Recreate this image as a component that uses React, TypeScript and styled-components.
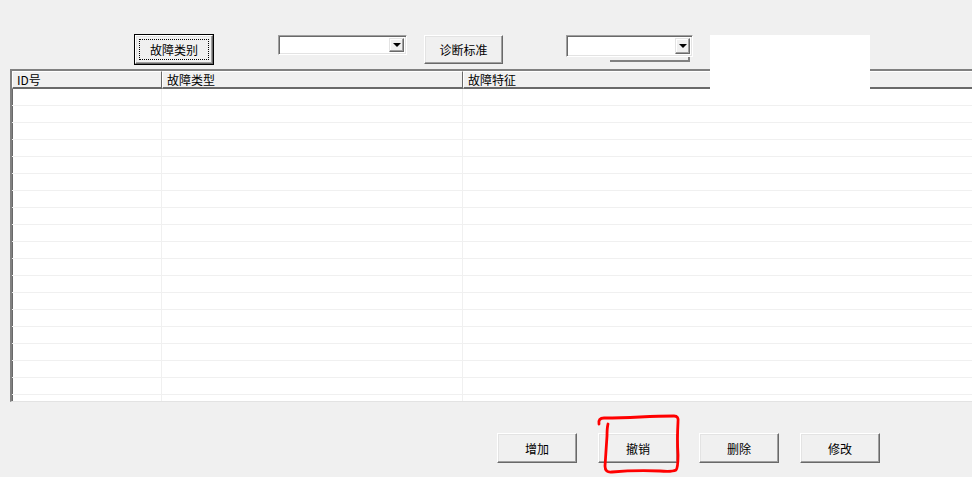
import React from "react";
import styled, { createGlobalStyle } from "styled-components";

const GlobalStyle = createGlobalStyle`
  html, body {
    margin: 0;
    padding: 0;
    background: #f0f0f0;
    overflow: hidden;
  }
  body {
    font-family: "Noto Sans CJK SC", "DejaVu Sans", sans-serif;
    font-size: 12px;
    color: #000;
  }
`;

const Page = styled.div`
  position: relative;
  width: 972px;
  height: 477px;
  overflow: hidden;
  background: #f0f0f0;
`;

const Toolbar = styled.div`
  display: flex;
  align-items: flex-start;
  padding: 35px 0 0 135px;
  height: 29px;
`;

const RaisedButton = styled.button<{ $focused?: boolean; $width?: number; $height?: number }>`
  position: relative;
  box-sizing: border-box;
  width: ${(p) => p.$width ?? 80}px;
  height: ${(p) => p.$height ?? 30}px;
  margin: 0;
  padding: 0;
  background: #f0f0f0;
  font-family: inherit;
  font-size: 12px;
  color: #000;
  border: 1px solid;
  border-color: #ffffff #696969 #696969 #ffffff;
  box-shadow: inset -1px -1px 0 #a0a0a0, inset 1px 1px 0 #e3e3e3;
  outline: ${(p) => (p.$focused ? "1px solid #000" : "none")};
  outline-offset: 0;
  cursor: default;

  &::after {
    content: "";
    display: ${(p) => (p.$focused ? "block" : "none")};
    position: absolute;
    inset: 3px;
    border: 1px dotted #000;
  }
`;

const Combo = styled.div<{ $width: number; $height: number; $left: number }>`
  position: relative;
  box-sizing: border-box;
  margin-left: ${(p) => p.$left}px;
  width: ${(p) => p.$width}px;
  height: ${(p) => p.$height}px;
  background: #fff;
  border: 1px solid;
  border-color: #a0a0a0 #ffffff #ffffff #a0a0a0;
  box-shadow: inset 1px 1px 0 #696969, inset -1px -1px 0 #e3e3e3;
`;

const ComboArrow = styled.div`
  position: absolute;
  top: 2px;
  right: 2px;
  bottom: 2px;
  width: 15px;
  box-sizing: border-box;
  background: #f0f0f0;
  border: 1px solid;
  border-color: #e3e3e3 #696969 #696969 #e3e3e3;
  box-shadow: inset -1px -1px 0 #a0a0a0, inset 1px 1px 0 #fff;
  display: flex;
  align-items: center;
  justify-content: center;

  &::before {
    content: "";
    width: 0;
    height: 0;
    border-left: 4px solid transparent;
    border-right: 4px solid transparent;
    border-top: 4px solid #000;
  }
`;

const HiddenLedge = styled.div`
  position: absolute;
  left: 43px;
  top: 100%;
  width: 80px;
  height: 5px;
  box-sizing: border-box;
  background: #f0f0f0;
  border-right: 2px solid #808080;
  border-bottom: 2px solid #808080;
  margin-top: 1px;
`;

const WhitePatch = styled.div`
  position: absolute;
  left: 710px;
  top: 35px;
  width: 160px;
  height: 55px;
  background: #fff;
  z-index: 2;
`;

const Grid = styled.div`
  margin: 5px 0 0 10px;
  width: 980px;
  height: 333px;
  box-sizing: border-box;
  background: #fff;
  border-top: 2px solid #808080;
  border-left: 2px solid #808080;
  border-bottom: 1px solid #e3e3e3;
  box-shadow: inset 1px 1px 0 #696969;
  overflow: hidden;
`;

const Cols = "150px 301px 1fr";

const HeaderRow = styled.div`
  display: grid;
  grid-template-columns: ${Cols};
  height: 18px;
`;

const HeaderCell = styled.div`
  box-sizing: border-box;
  padding-left: 4px;
  background: #f0f0f0;
  border-top: 1px solid #ffffff;
  border-left: 1px solid #ffffff;
  border-right: 1px solid #696969;
  border-bottom: 2px solid #696969;
  line-height: 15px;
  white-space: nowrap;
`;

const BodyRow = styled.div`
  display: grid;
  grid-template-columns: ${Cols};
  height: 17px;
`;

const BodyCell = styled.div`
  box-sizing: border-box;
  border-right: 1px solid #f0f0f0;
  border-bottom: 1px solid #f0f0f0;
`;

const Actions = styled.div`
  display: flex;
  gap: 21px;
  padding: 31px 0 0 497px;
`;

const Scribble = styled.svg`
  position: absolute;
  left: 0;
  top: 0;
  pointer-events: none;
  z-index: 3;
`;

const rows = Array.from({ length: 19 });

export default function App() {
  return (
    <Page>
      <GlobalStyle />
      <Toolbar>
        <RaisedButton $focused $width={78} $height={29}>
          故障类别
        </RaisedButton>
        <Combo $left={65} $width={129} $height={20}>
          <ComboArrow />
        </Combo>
        <RaisedButton $width={79} $height={29} style={{ marginLeft: 17 }}>
          诊断标准
        </RaisedButton>
        <Combo $left={63} $width={127} $height={22}>
          <ComboArrow />
          <HiddenLedge />
        </Combo>
      </Toolbar>
      <WhitePatch />
      <Grid>
        <HeaderRow>
          <HeaderCell>ID号</HeaderCell>
          <HeaderCell>故障类型</HeaderCell>
          <HeaderCell>故障特征</HeaderCell>
        </HeaderRow>
        {rows.map((_, i) => (
          <BodyRow key={i}>
            <BodyCell />
            <BodyCell />
            <BodyCell />
          </BodyRow>
        ))}
      </Grid>
      <Actions>
        <RaisedButton>增加</RaisedButton>
        <RaisedButton>撤销</RaisedButton>
        <RaisedButton>删除</RaisedButton>
        <RaisedButton>修改</RaisedButton>
      </Actions>
      <Scribble width="972" height="477" viewBox="0 0 972 477">
        <path
          d="M599 424 Q598 418 604 418 Q620 418 640 417 Q660 416 674 416 Q679 416 678 422 Q677 440 678 455 Q678 468 676 470 Q672 472 660 471 Q635 470 612 472 Q605 473 605 466 Q606 450 607 436 Q607 428 608 424"
          fill="none"
          stroke="#ff0000"
          strokeWidth="2.8"
          strokeLinecap="round"
          strokeLinejoin="round"
        />
      </Scribble>
    </Page>
  );
}
